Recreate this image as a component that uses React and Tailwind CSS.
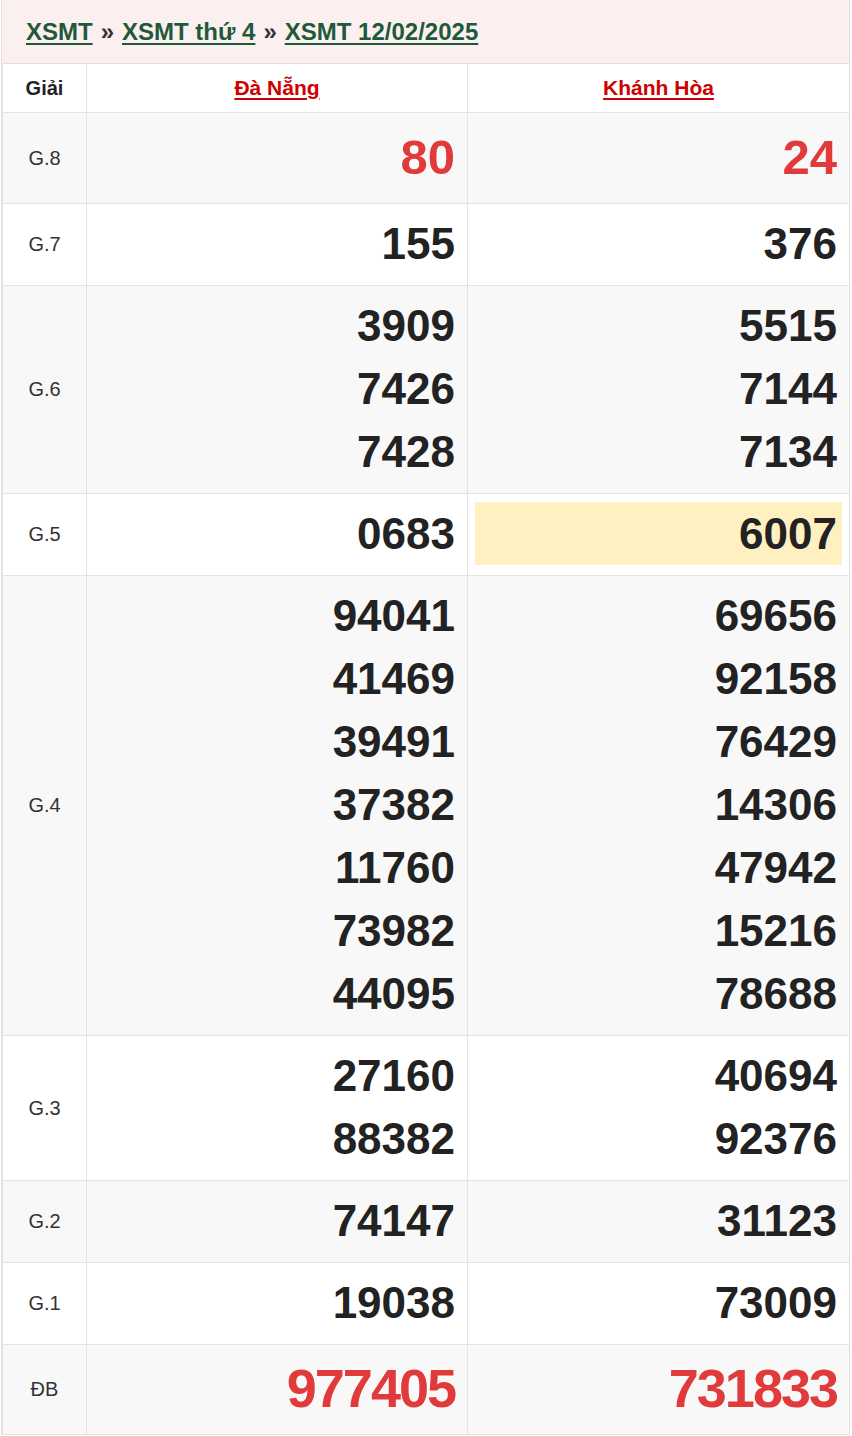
const rows = [
  { label: 'G.8', a: ['80'], b: ['24'], red: true },
  { label: 'G.7', a: ['155'], b: ['376'] },
  { label: 'G.6', a: ['3909', '7426', '7428'], b: ['5515', '7144', '7134'] },
  { label: 'G.5', a: ['0683'], b: ['6007'], hlB: true },
  {
    label: 'G.4',
    a: ['94041', '41469', '39491', '37382', '11760', '73982', '44095'],
    b: ['69656', '92158', '76429', '14306', '47942', '15216', '78688'],
  },
  { label: 'G.3', a: ['27160', '88382'], b: ['40694', '92376'] },
  { label: 'G.2', a: ['74147'], b: ['31123'] },
  { label: 'G.1', a: ['19038'], b: ['73009'] },
  { label: 'ĐB', a: ['977405'], b: ['731833'], special: true },
];

function NumCell({ nums, red, special, highlight }) {
  const color = red || special ? 'text-[#e03a3a]' : 'text-[#222222]';
  let size = 'text-[44px] leading-[63px]';
  if (special) size = 'text-[54px] tracking-[-2px] leading-[71px]';
  else if (red) size = 'text-[49px] leading-[72px]';
  return (
    <td className="border border-[#e3e3e3] px-[7px] pt-[8px] pb-[10px] align-middle">
      <div className={`${highlight ? 'bg-[#fff0c2]' : ''} pl-[6px] pr-[5px] text-right font-bold ${color} ${size}`}>
        {nums.map((n) => (
          <div key={n}>{n}</div>
        ))}
      </div>
    </td>
  );
}

export default function App() {
  return (
    <div className="w-[852px] bg-white font-['Liberation_Sans',Arial,sans-serif]">
      <div className="ml-[1px] w-[849px] border-x border-[#e3e3e3]">
        <div className="flex h-[64px] items-center gap-[8px] border-b border-[#eadada] bg-[#fcefef] px-[24px] text-[24px] font-bold">
          <a href="#" className="text-[#1e5a3a] underline underline-offset-[3px]">XSMT</a>
          <span className="text-[#333333]">»</span>
          <a href="#" className="text-[#1e5a3a] underline underline-offset-[3px]">XSMT thứ 4</a>
          <span className="text-[#333333]">»</span>
          <a href="#" className="text-[#1e5a3a] underline underline-offset-[3px]">XSMT 12/02/2025</a>
        </div>
        <table className="w-full table-fixed border-collapse">
          <colgroup>
            <col className="w-[84px]" />
            <col className="w-[381px]" />
            <col className="w-[382px]" />
          </colgroup>
          <thead>
            <tr className="h-[48px] bg-white">
              <th className="border border-t-0 border-[#e3e3e3] text-[20px] font-bold text-[#222222]">Giải</th>
              <th className="border border-t-0 border-[#e3e3e3] text-[21px] font-bold">
                <a href="#" className="text-[#d00000] underline underline-offset-[3px]">Đà Nẵng</a>
              </th>
              <th className="border border-t-0 border-[#e3e3e3] text-[21px] font-bold">
                <a href="#" className="text-[#d00000] underline underline-offset-[3px]">Khánh Hòa</a>
              </th>
            </tr>
          </thead>
          <tbody>
            {rows.map((r, i) => (
              <tr key={r.label} className={i % 2 === 0 ? 'bg-[#f8f8f8]' : 'bg-white'}>
                <td className="border border-[#e3e3e3] text-center text-[20px] text-[#333333]">{r.label}</td>
                <NumCell nums={r.a} red={r.red} special={r.special} />
                <NumCell nums={r.b} red={r.red} special={r.special} highlight={r.hlB} />
              </tr>
            ))}
          </tbody>
        </table>
      </div>
    </div>
  );
}
